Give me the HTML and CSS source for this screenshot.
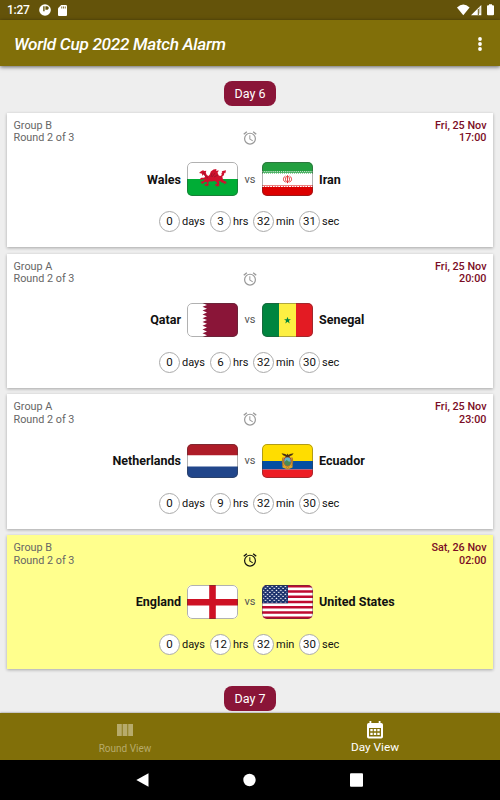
FILE: index.html
```
<!DOCTYPE html>
<html lang="en">
<head>
  <meta charset="UTF-8" />
  <meta name="viewport" content="width=device-width, initial-scale=1.0" />
  <title>World Cup 2022 Match Alarm</title>
  <link rel="stylesheet" href="styles.css">
</head>
<body>
  <svg class="defs" width="0" height="0">
    <symbol id="alarm" viewBox="0 0 24 24">
      <path d="M22 5.7l-4.6-3.9-1.3 1.5 4.6 3.9L22 5.7zM7.9 3.4L6.6 1.9 2 5.7l1.3 1.5 4.6-3.8zM12.5 8H11v6l4.7 2.9.8-1.2-4-2.4V8zM12 4a9 9 0 1 0 0 18 9 9 0 0 0 0-18zm0 16.2a7.2 7.2 0 1 1 0-14.4 7.2 7.2 0 0 1 0 14.4z"/>
    </symbol>
    <pattern id="stars" width="4.4" height="4" patternUnits="userSpaceOnUse">
      <path d="M1.3 .3l.3.7.8 0-.6.5.2.8-.7-.4-.7.4.2-.8L.2 1h.8zM3.5 2.3l.3.7.8 0-.6.5.2.8-.7-.4-.7.4.2-.8-.6-.5h.8z" fill="#fff"/>
    </pattern>
  </svg>

  <div class="status-bar">
    <span class="clock">1:27</span>
    <svg class="status-app" width="12" height="12" viewBox="0 0 12 12">
      <circle cx="6" cy="6" r="5.8" fill="#fff"/>
      <path d="M4.2 2.3h1.4v5H4.2zM6.4 2.3h1.4c1.3 0 1.9.7 1.9 1.7s-.7 1.8-1.9 1.8H6.4z" fill="#64530a"/>
    </svg>
    <svg class="status-card" width="9" height="11" viewBox="0 0 9 11">
      <path d="M3.2 0h4.6Q9 0 9 1v9q0 1-1 1H1q-1 0-1-1V3.2z" fill="#fff"/>
      <path d="M3.4 1.5h.8v2h-.8zM5.1 1.5h.8v2h-.8zM6.8 1.5h.8v2h-.8z" fill="#64530a"/>
    </svg>
    <svg class="status-icons" width="38" height="12" viewBox="0 0 38 12">
      <path d="M0 3.4Q6.3-2.3 12.6 3.4L6.3 11.3z" fill="#fff"/>
      <path d="M14 11.3L24.3 1v10.3z" fill="#fff"/>
      <path d="M20.8 5h1v6h-1z" fill="#64530a"/>
      <path d="M22.3 3.5h1v6h-1z" fill="#64530a" opacity=".45"/>
      <path d="M32 .2h3v1h1q1 0 1 1v8q0 1.1-1 1.1h-5q-1 0-1-1.1v-8q0-1 1-1h1z" fill="#fff"/>
    </svg>
  </div>

  <header class="app-bar">
    <h1>World Cup 2022 Match Alarm</h1>
    <svg width="4" height="14" viewBox="0 0 4 14" fill="#fff">
      <circle cx="2" cy="2" r="1.9"/><circle cx="2" cy="7" r="1.9"/><circle cx="2" cy="12" r="1.9"/>
    </svg>
  </header>

  <main class="match-list">
    <div class="day">Day 6</div>

    <section class="match">
      <div class="match-info">
        <p>Group B<br>Round 2 of 3</p>
        <svg class="alarm"><use href="#alarm"/></svg>
        <p class="date">Fri, 25 Nov<br>17:00</p>
      </div>
      <div class="teams">
        <span class="team home">Wales</span>
        <span class="flag">
          <svg viewBox="0 0 51 34">
            <path d="M0 0h51v17H0z" fill="#fff"/><path d="M0 17h51v17H0z" fill="#00ad36"/>
            <path d="M12 11l2-1.8 2-1 1.3.9 2-.4-.5 2 1 2.2 1.7 1 1.3-1.3 1-3 2.7-2.1 3-.5-.5 1.8 2.9-.2-1.4 2.2 1.3 2.6 1.6.5 1.3-1-.3-1.7 1-1.3-.8-.7 4.4-1-.6 3-1-.5-.5 2.6-1.6 1.2.5 2.2.9 2 2.4.9.5 2.2-1.2-.5-1 .9-.6-1.3-2.2-.4-1.6-1.6-1.3.5.9 1.9-.7 1.5.8 1.4-1.6-.3-1.2.8-.6-1.1-1.6 0 .9-1.3 1.4-.5-.5-1.7-2-1.2-3 .5-2-.2-1.3 1.2.2 1.9.9 1-1.4.2-1 1-.8-.9-1.7.1.7-1.4 1.7-.3.5-1.7-2.6-.2-1.5 1.5-1.5.5-.2-1.3-1-.3.9-1.1 2.2-.3 1-1.8-2-.1-1.1 1.1-1.3-.2.6-.9-.7-.7 1.4-.8 2.2.1 1.5-.9-.6-1.5-1-.9-1.2 1.3-.5-1 .5-.9-1.1-.4z" fill="#cf102d"/>
            <path d="M16.5 10l1.5 4 3 2M25 11l-1 4M28 11l-3 4M31 13l-4 2" fill="none" stroke="#83102b" stroke-width=".6"/>
          </svg>
        </span>
        <span class="vs">vs</span>
        <span class="flag">
          <svg viewBox="0 0 51 34">
            <path d="M0 0h51v34H0z" fill="#fff"/><path d="M0 0h51v10.7H0z" fill="#239f40"/><path d="M0 23.6h51V34H0z" fill="#dc0000"/>
            <path d="M0 9.5h51" stroke="#fff" stroke-width=".9" stroke-dasharray="1.3 .8" opacity=".8"/>
            <path d="M0 11.1h51" stroke="#239f40" stroke-width=".8" stroke-dasharray="1 1"/>
            <path d="M0 24.5h51" stroke="#fff" stroke-width="1" stroke-dasharray="2 .7"/>
            <path d="M25.5 13.2v8M23.4 14c-2.8 2-2.5 5 .2 6.2M27.6 14c2.8 2 2.5 5-.2 6.2M24.6 14.2c-1.6 2-1.5 4.6.5 6.3M26.4 14.2c1.6 2 1.5 4.6-.5 6.3" fill="none" stroke="#da0000" stroke-width=".75"/>
          </svg>
        </span>
        <span class="team">Iran</span>
      </div>
      <div class="countdown">
        <span class="days"><b>0</b>days</span><span class="hrs"><b>3</b>hrs</span><span class="min"><b>32</b>min</span><span class="sec"><b>31</b>sec</span>
      </div>
    </section>

    <section class="match">
      <div class="match-info">
        <p>Group A<br>Round 2 of 3</p>
        <svg class="alarm"><use href="#alarm"/></svg>
        <p class="date">Fri, 25 Nov<br>20:00</p>
      </div>
      <div class="teams">
        <span class="team home">Qatar</span>
        <span class="flag">
          <svg viewBox="0 0 51 34">
            <path d="M0 0h51v34H0z" fill="#fff"/>
            <path d="M51 0H15.5l4.5 1.9-4.5 1.9 4.5 1.9-4.5 1.9 4.5 1.9-4.5 1.9 4.5 1.9-4.5 1.9L20 17l-4.5 1.9 4.5 1.9-4.5 1.9 4.5 1.9-4.5 1.9 4.5 1.9-4.5 1.9 4.5 1.9-4.5 1.7H51z" fill="#8a1538"/>
          </svg>
        </span>
        <span class="vs">vs</span>
        <span class="flag">
          <svg viewBox="0 0 51 34">
            <path d="M0 0h17v34H0z" fill="#00853f"/><path d="M17 0h17v34H17z" fill="#fdef42"/><path d="M34 0h17v34H34z" fill="#e31b23"/>
            <path d="M25.5 13.7l.9 2.5h2.6l-2.1 1.6.8 2.6-2.2-1.6-2.2 1.6.8-2.6-2.1-1.6h2.6z" fill="#00853f"/>
          </svg>
        </span>
        <span class="team">Senegal</span>
      </div>
      <div class="countdown">
        <span class="days"><b>0</b>days</span><span class="hrs"><b>6</b>hrs</span><span class="min"><b>32</b>min</span><span class="sec"><b>30</b>sec</span>
      </div>
    </section>

    <section class="match">
      <div class="match-info">
        <p>Group A<br>Round 2 of 3</p>
        <svg class="alarm"><use href="#alarm"/></svg>
        <p class="date">Fri, 25 Nov<br>23:00</p>
      </div>
      <div class="teams">
        <span class="team home">Netherlands</span>
        <span class="flag">
          <svg viewBox="0 0 51 34">
            <path d="M0 0h51v11.5H0z" fill="#ae1c28"/><path d="M0 11.5h51v11H0z" fill="#fff"/><path d="M0 22.5h51V34H0z" fill="#21468b"/>
          </svg>
        </span>
        <span class="vs">vs</span>
        <span class="flag">
          <svg viewBox="0 0 51 34">
            <path d="M0 0h51v17H0z" fill="#fd0"/><path d="M0 17h51v8.5H0z" fill="#034ea2"/><path d="M0 25.5h51V34H0z" fill="#ed1c24"/>
            <path d="M20 13.5l.5 10 5 2 5-2 .5-10-3-1h-5z" fill="#d9a52b"/>
            <ellipse cx="25.5" cy="17.3" rx="3.7" ry="4.7" fill="#65b5c8" stroke="#a32d27" stroke-width=".8"/>
            <path d="M22.3 18l2.5-2 1.8 1.4 2.4.3-1 3-2.5 1.2-2.5-1.5z" fill="#4b8b51"/>
            <path d="M19.5 9.2l3.7.8 1.6.9.7-1.3 1 1.3 1.5-.9 3.6-.8-1.5 2-2 .7-1.1 1.4h-2.9L23 11.9l-2-.7z" fill="#4a3212"/>
            <path d="M21 14l-1 4 1.2 4M30 14l1 4-1.2 4M24 23.5l1.5 1.2 1.5-1.2" fill="none" stroke="#8b5929" stroke-width=".6"/>
          </svg>
        </span>
        <span class="team">Ecuador</span>
      </div>
      <div class="countdown">
        <span class="days"><b>0</b>days</span><span class="hrs"><b>9</b>hrs</span><span class="min"><b>32</b>min</span><span class="sec"><b>30</b>sec</span>
      </div>
    </section>

    <section class="match active">
      <div class="match-info">
        <p>Group B<br>Round 2 of 3</p>
        <svg class="alarm"><use href="#alarm"/></svg>
        <p class="date">Sat, 26 Nov<br>02:00</p>
      </div>
      <div class="teams">
        <span class="team home">England</span>
        <span class="flag">
          <svg viewBox="0 0 51 34">
            <path d="M0 0h51v34H0z" fill="#fff"/><path d="M22.2 0h6.6v34h-6.6zM0 14h51v6.5H0z" fill="#ce1124"/>
          </svg>
        </span>
        <span class="vs">vs</span>
        <span class="flag">
          <svg viewBox="0 0 51 34">
            <path d="M0 0h51v34H0z" fill="#fff"/>
            <path d="M0 1.3h51M0 6.54h51M0 11.77h51M0 17h51M0 22.23h51M0 27.46h51M0 32.7h51" stroke="#bf0a30" stroke-width="2.6"/>
            <path d="M0 0h26v18.3H0z" fill="#192f6b"/><path d="M1.2 1h24v16.6H1.2z" fill="url(#stars)"/>
          </svg>
        </span>
        <span class="team">United States</span>
      </div>
      <div class="countdown">
        <span class="days"><b>0</b>days</span><span class="hrs"><b>12</b>hrs</span><span class="min"><b>32</b>min</span><span class="sec"><b>30</b>sec</span>
      </div>
    </section>

    <div class="day">Day 7</div>
  </main>

  <nav class="tabs">
    <a class="tab">
      <svg width="16" height="18" viewBox="0 0 16 18"><path d="M0 3h4.8v12H0zM5.6 3h4.8v12H5.6zM11.2 3H16v12h-4.8z" fill="currentColor"/></svg>
      Round View
    </a>
    <a class="tab selected">
      <svg width="16" height="18" viewBox="0 0 16 18">
        <path fill-rule="evenodd" d="M2.5 0h1.8v2h7.4V0h1.8v2h.7Q16 2 16 3.8v12q0 1.7-1.8 1.7H1.8Q0 17.5 0 15.8v-12Q0 2 1.8 2h.7zM2 7v8.6h12V7z" fill="currentColor"/>
        <path d="M3.3 8h2.4v2.2H3.3zM6.8 8h2.4v2.2H6.8zM10.3 8h2.4v2.2h-2.4zM3.3 11.8h2.4V14H3.3zM6.8 11.8h2.4V14H6.8zM10.3 11.8h2.4V14h-2.4z" fill="currentColor"/>
      </svg>
      Day View
    </a>
  </nav>

  <div class="system-nav">
    <svg width="13" height="14" viewBox="0 0 13 14"><path d="M12.5.2v13.6L.3 7z" fill="#fff"/></svg>
    <svg width="13" height="14" viewBox="0 0 13 14"><circle cx="6.5" cy="7" r="6.2" fill="#fff"/></svg>
    <svg width="13" height="14" viewBox="0 0 13 14"><rect y=".3" width="13" height="13.4" rx="1" fill="#fff"/></svg>
  </div>
</body>
</html>
```
FILE: styles.css
```
*,*::before,*::after{box-sizing:border-box;margin:0;padding:0;}
body{
  width:500px;
  height:800px;
  display:flex;
  flex-direction:column;
  overflow:hidden;
  font-family:Roboto, sans-serif;
  background:#eee;
  color:#111;
}
svg{display:block;flex:none;}
.defs{position:absolute;}
.status-bar{
  height:20px;
  flex:none;
  display:flex;
  align-items:center;
  padding:0 6px 0 7px;
  background:#64530a;
  color:#fff;
}
.clock{
  width:32px;
  font-size:12px;
  font-weight:500;
  letter-spacing:-.3px;
}
.status-card{margin-left:7px;}
.status-icons{margin-left:auto;margin-right:-1px;}
.app-bar{
  height:46px;
  flex:none;
  display:flex;
  align-items:center;
  justify-content:space-between;
  padding:1px 18px 0 14px;
  background:#816f09;
  color:#fff;
  box-shadow:0 1px 4px rgba(0,0,0,.6);
  z-index:1;
}
.app-bar h1{
  font-size:17.2px;
  font-weight:500;
  font-style:italic;
  letter-spacing:-.3px;
}
.match-list{
  flex:1;
  min-height:0;
  overflow:hidden;
  display:flex;
  flex-direction:column;
  padding:15px 7px 0;
}
.day{
  flex:none;
  align-self:center;
  width:52px;
  height:25px;
  margin-bottom:6.8px;
  border-radius:8px;
  background:#8a1538;
  color:#fff;
  font-size:12.5px;
  line-height:25px;
  text-align:center;
}
.match{
  flex:none;
  height:134.2px;
  margin-bottom:6.6px;
  padding:7px 6.5px;
  background:#fff;
  box-shadow:0 1px 3px rgba(0,0,0,.3);
}
.match.active{background:#ffff8d;}
.match.active + .day{margin-top:9.7px;}
.match-info{
  display:grid;
  grid-template-columns:1fr 16px 1fr;
  height:42.4px;
  font-size:10.8px;
  line-height:12.5px;
  color:#666;
}
.match-info .date{
  text-align:right;
  font-weight:500;
  color:#7b0d25;
}
.alarm{
  width:16px;
  height:16px;
  margin-top:10px;
  fill:#999;
}
.active .alarm{fill:#111;}
.teams{
  display:grid;
  grid-template-columns:1fr 51px 24px 51px 1fr;
  align-items:center;
}
.team{
  padding-left:6px;
  font-size:12.5px;
  font-weight:700;
}
.team.home{
  padding:0 6px 0 0;
  text-align:right;
}
.flag{
  position:relative;
  height:34px;
  border-radius:5px;
  overflow:hidden;
}
.flag::after{
  content:"";
  position:absolute;
  inset:0;
  border:1px solid rgba(60,60,60,.4);
  border-radius:5px;
}
.flag svg{
  width:100%;
  height:100%;
}
.vs{
  font-size:11px;
  text-align:center;
  color:#555;
}
.countdown{
  display:flex;
  margin:15px 0 0 145.5px;
  font-size:11px;
  line-height:21px;
}
.countdown span{
  display:flex;
  gap:2px;
}
.countdown b{
  width:21px;
  height:21px;
  border:1px solid #aaa;
  border-radius:50%;
  background:#fff;
  font-size:11.5px;
  font-weight:400;
  line-height:19px;
  text-align:center;
}
.days{width:51px;}
.hrs{width:43px;}
.min{width:46px;}
.sec{width:42px;}
.tabs{
  height:47px;
  flex:none;
  display:flex;
  background:#816f09;
  box-shadow:0 0 2px rgba(0,0,0,.5);
  z-index:1;
}
.tab{
  flex:1;
  display:flex;
  flex-direction:column;
  align-items:center;
  gap:3px;
  padding-top:8px;
  font-size:10px;
  line-height:13px;
  color:#b7ab6b;
}
.tab.selected{
  gap:2px;
  font-size:11.8px;
  color:#fff;
}
.system-nav{
  height:40px;
  flex:none;
  display:flex;
  align-items:center;
  justify-content:center;
  gap:94px;
  background:#000;
}
.system-nav svg:first-child{margin-left:-1px;}
```
